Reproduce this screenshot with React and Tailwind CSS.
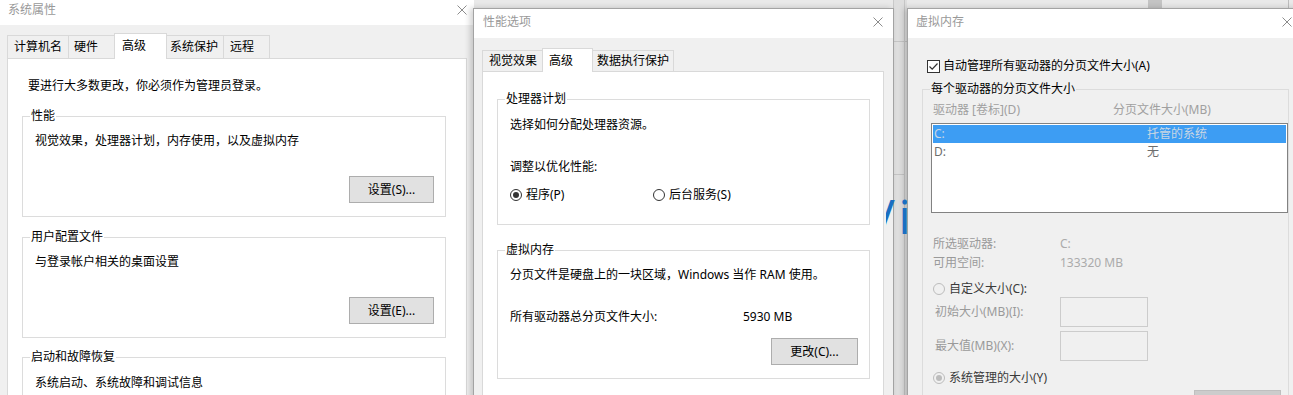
import React from 'react';

const CloseX = ({ className = '' }) => (
  <svg width="10" height="10" viewBox="0 0 10 10" className={className}>
    <path d="M0.5 0.5L9.5 9.5M9.5 0.5L0.5 9.5" stroke="#8c8c8c" strokeWidth="1" fill="none" />
  </svg>
);

// group box with its caption sitting on the top border
const Group = ({ label, className = '', labelClass = 'bg-white text-black', children }) => (
  <div className={`relative border border-[#dcdcdc] ${className}`}>
    <span className={`absolute -top-[9px] left-[7px] px-px leading-4 whitespace-nowrap ${labelClass}`}>{label}</span>
    {children}
  </div>
);

const Btn = ({ children, className = '' }) => (
  <div className={`flex items-center justify-center h-[27px] border border-[#adadad] bg-[#e1e1e1] text-black ${className}`}>
    {children}
  </div>
);

const Radio = ({ checked, disabled }) => (
  <span
    className={`flex items-center justify-center w-[12px] h-[12px] rounded-full border ${
      disabled ? 'border-[#bcbcbc] bg-[#f0f0f0]' : 'border-[#333333] bg-white'
    }`}
  >
    {checked && <span className={`w-[6px] h-[6px] rounded-full ${disabled ? 'bg-[#bcbcbc]' : 'bg-[#333333]'}`} />}
  </span>
);

const Checkbox = () => (
  <span className="flex items-center justify-center w-[13px] h-[13px] border border-[#333333] bg-white">
    <svg width="11" height="11" viewBox="0 0 11 11">
      <path d="M1.5 5.5L4.2 8.2L9.5 2.5" stroke="#333333" strokeWidth="1.2" fill="none" />
    </svg>
  </span>
);

const Tab = ({ children, w, pl, selected, first, tall, short }) =>
  selected ? (
    <div
      className={`relative z-10 -ml-px -mb-px bg-white border border-b-0 border-[#d9d9d9] leading-4 ${tall} ${w} ${pl} pt-[4px]`}
    >
      {children}
    </div>
  ) : (
    <div
      className={`flex items-center bg-[#f0f0f0] border border-b-0 border-[#d9d9d9] leading-4 ${short} ${w} ${pl} ${
        first ? '' : '-ml-px'
      }`}
    >
      {children}
    </div>
  );

const SystemProperties = () => (
  <div className="absolute left-0 top-0 w-[474px] h-[420px] bg-[#f0f0f0]">
    <div className="flex items-start justify-between h-[25px] bg-white pl-[8px] pr-[7px] pt-[2px]">
      <span className="leading-4 text-[#999999]">系统属性</span>
      <CloseX className="mt-[3px]" />
    </div>
    <div className="flex items-end h-[25px] mt-[8px] ml-[7px]">
      <Tab first w="w-[62px]" pl="pl-[6px]" short="h-[23px]">计算机名</Tab>
      <Tab w="w-[47px]" pl="pl-[5px]" short="h-[23px]">硬件</Tab>
      <Tab selected w="w-[53px]" pl="pl-[7px]" tall="h-[26px]">高级</Tab>
      <Tab w="w-[58px]" pl="pl-[3px]" short="h-[23px]">系统保护</Tab>
      <Tab w="w-[47px]" pl="pl-[6px]" short="h-[23px]">远程</Tab>
    </div>
    <div className="ml-[7px] w-[460px] h-[360px] bg-white border border-[#d9d9d9] pt-[19px]">
      <p className="pl-[20px] leading-4">要进行大多数更改，你必须作为管理员登录。</p>

      <Group label="性能" className="ml-[14px] w-[424px] mt-[22px] flex flex-col pt-[16px] pb-[13px]">
        <p className="pl-[12px] leading-4">视觉效果，处理器计划，内存使用，以及虚拟内存</p>
        <Btn className="self-end mr-[11px] mt-[27px] w-[85px]">设置(S)...</Btn>
      </Group>

      <Group label="用户配置文件" className="ml-[14px] w-[424px] mt-[20px] flex flex-col pt-[16px] pb-[13px]">
        <p className="pl-[12px] leading-4">与登录帐户相关的桌面设置</p>
        <Btn className="self-end mr-[11px] mt-[27px] w-[85px]">设置(E)...</Btn>
      </Group>

      <Group label="启动和故障恢复" className="ml-[14px] w-[424px] mt-[19px] h-[80px] pt-[17px]">
        <p className="pl-[12px] leading-4">系统启动、系统故障和调试信息</p>
      </Group>
    </div>
  </div>
);

const PerformanceOptions = () => (
  <div className="absolute z-10 left-[473px] top-[8px] w-[421px] h-[400px] bg-[#f0f0f0] border border-[#a3a3a3] shadow-[-3px_0_6px_rgba(0,0,0,0.18)]">
    <div className="flex items-start justify-between h-[29px] bg-white pl-[9px] pr-[10px] pt-[5px]">
      <span className="leading-4 text-[#999999]">性能选项</span>
      <CloseX className="mt-[3px]" />
    </div>
    <div className="flex items-end h-[23px] mt-[10px] ml-[8px]">
      <Tab first w="w-[61px]" pl="pl-[6px]" short="h-[21px]">视觉效果</Tab>
      <Tab selected w="w-[51px]" pl="pl-[6px]" tall="h-[24px]">高级</Tab>
      <Tab w="w-[82px]" pl="pl-[4px]" short="h-[21px]">数据执行保护</Tab>
    </div>
    <div className="ml-[8px] w-[402px] h-[340px] bg-white border border-[#d9d9d9] pt-[27px]">
      <Group label="处理器计划" className="ml-[14px] w-[373px] pt-[17px] pb-[21px] pl-[12px]">
        <p className="leading-4">选择如何分配处理器资源。</p>
        <p className="leading-4 mt-[26px]">调整以优化性能:</p>
        <div className="flex items-center h-[16px] mt-[12px]">
          <div className="flex items-center gap-[4px] w-[143px]">
            <Radio checked />
            <span className="leading-4">程序(P)</span>
          </div>
          <div className="flex items-center gap-[4px]">
            <Radio />
            <span className="leading-4">后台服务(S)</span>
          </div>
        </div>
      </Group>

      <Group label="虚拟内存" className="ml-[14px] w-[373px] mt-[25px] flex flex-col pt-[16px] pb-[13px]">
        <p className="pl-[12px] leading-4">分页文件是硬盘上的一块区域，Windows 当作 RAM 使用。</p>
        <div className="flex pl-[12px] leading-4 mt-[26px]">
          <span className="w-[233px]">所有驱动器总分页文件大小:</span>
          <span>5930 MB</span>
        </div>
        <Btn className="self-end mr-[11px] mt-[13px] w-[87px]">更改(C)...</Btn>
      </Group>
    </div>
  </div>
);

const VirtualMemory = () => (
  <div className="absolute z-10 left-[907px] top-[8px] w-[396px] h-[400px] bg-[#f0f0f0] border border-[#a3a3a3] shadow-[-3px_0_6px_rgba(0,0,0,0.18)]">
    <div className="flex items-start justify-between h-[29px] bg-white pl-[8px] pr-[10px] pt-[5px]">
      <span className="leading-4 text-[#999999]">虚拟内存</span>
      <CloseX className="mt-[3px]" />
    </div>
    <div className="flex items-center gap-[3px] h-[16px] mt-[20px] pl-[19px]">
      <Checkbox />
      <span className="leading-4">自动管理所有驱动器的分页文件大小(A)</span>
    </div>
    <Group
      label="每个驱动器的分页文件大小"
      labelClass="bg-[#f0f0f0] text-black"
      className="ml-[14px] w-[367px] h-[330px] mt-[15px] pt-[12px] border-b-0"
    >
      <div className="flex pl-[10px] leading-4 text-[#a0a0a0]">
        <span className="w-[180px]">驱动器 [卷标](D)</span>
        <span>分页文件大小(MB)</span>
      </div>
      <div className="ml-[8px] mt-[5px] w-[357px] h-[90px] bg-white border border-[#828282] pt-px px-px">
        <div className="flex items-center h-[18px] bg-[#3d9df3] pl-px text-[#c9d6e3] leading-4">
          <span className="w-[213px]">C:</span>
          <span>托管的系统</span>
        </div>
        <div className="flex items-center h-[18px] pl-px text-[#6d6d6d] leading-4">
          <span className="w-[213px]">D:</span>
          <span>无</span>
        </div>
      </div>
      <div className="mt-[21px] pl-[10px]">
        <div className="flex items-center h-[19px] text-[#9a9a9a]">
          <span className="w-[127px]">所选驱动器:</span>
          <span className="text-[#ababab]">C:</span>
        </div>
        <div className="flex items-center h-[19px] text-[#9a9a9a]">
          <span className="w-[127px]">可用空间:</span>
          <span className="text-[#ababab]">133320 MB</span>
        </div>
        <div className="flex items-center gap-[4px] h-[16px] mt-[9px] text-[#3a3a3a]">
          <Radio disabled />
          <span className="leading-4">自定义大小(C):</span>
        </div>
        <div className="flex items-center pl-[2px] text-[#9a9a9a]">
          <span className="w-[125px]">初始大小(MB)(I):</span>
          <span className="w-[88px] h-[30px] border border-[#cccccc] bg-[#f0f0f0]" />
        </div>
        <div className="flex items-center pl-[2px] mt-[4px] text-[#9a9a9a]">
          <span className="w-[125px]">最大值(MB)(X):</span>
          <span className="w-[88px] h-[30px] border border-[#cccccc] bg-[#f0f0f0]" />
        </div>
        <div className="flex items-center gap-[4px] h-[16px] mt-[9px] text-[#3a3a3a]">
          <Radio disabled checked />
          <span className="leading-4">系统管理的大小(Y)</span>
        </div>
      </div>
      <div className="flex justify-end mt-[4px] mr-[7px]">
        <div className="w-[87px] h-[27px] border border-[#bfbfbf] bg-[#cccccc]" />
      </div>
    </Group>
  </div>
);

export default function App() {
  return (
    <div className="relative w-[1293px] h-[395px] overflow-hidden bg-[#e9e9e9] text-[12px] text-black font-['Noto_Sans','Noto_Sans_CJK_SC',sans-serif]">
      <SystemProperties />

      {/* bits of a window that sits behind the dialogs */}
      <div className="absolute left-[893px] top-0 w-[14px] h-[395px] bg-[#dedede] border-l border-[#c9c9c9]">
        <div className="h-[42px] border-b border-[#c4c4c4]" />
        <div className="h-[133px] border-b border-[#c4c4c4] w-[10px]" />
        <div className="absolute left-[10px] top-0 w-px h-full bg-[#c6c6c6]" />
      </div>
      <div className="absolute left-[1148px] top-0 w-[14px] h-[8px] bg-[#c4c4c4]" />
      <div className="absolute left-[1288px] top-0 w-px h-[8px] bg-[#bdbdbd]" />

      <PerformanceOptions />
      <VirtualMemory />

      {/* edge of the blue "Windows" wordmark showing through the gap */}
      <div className="absolute z-20 left-[886px] top-[186px] w-[21px] h-[52px] overflow-hidden">
        <span className="block -ml-[20px] whitespace-nowrap text-[48px] leading-[60px] tracking-[4px] text-[#1a6fc2] font-['Open_Sans',sans-serif]">
          Vi
        </span>
      </div>
    </div>
  );
}
